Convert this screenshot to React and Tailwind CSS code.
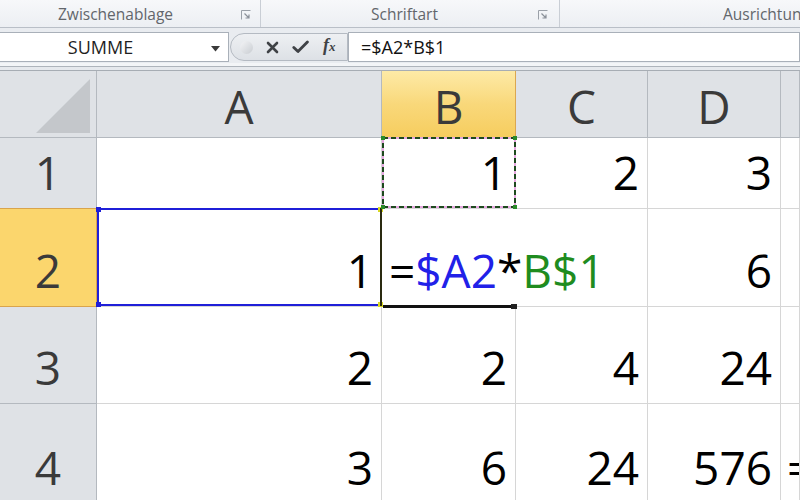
import React from "react";

const hdr = "bg-[#dfe2e6] border-r border-b border-[#b4b9bf] text-[#3a3a3a]";
const cellBase = "border-r border-b border-[#d6d6d6]";
const num = "flex items-end justify-end pr-[8px] pb-[13px] text-[46px] leading-none text-black";

function Launcher() {
  return (
    <svg width="10" height="10" viewBox="0 0 10 10" className="shrink-0">
      <path d="M0.5 9.5V0.5H9.5" fill="none" stroke="#9aa0a8" strokeWidth="1" />
      <path d="M3.5 3.5L8 8M8 4.5V8H4.5" fill="none" stroke="#8a9099" strokeWidth="1.2" />
    </svg>
  );
}

export default function App() {
  return (
    <div className="w-[800px] h-[500px] overflow-hidden bg-white relative font-['Open_Sans',sans-serif]">
      {/* Ribbon group labels */}
      <div className="h-[28px] flex bg-gradient-to-b from-[#f7f8fa] to-[#eceff3] border-b border-[#b9bfc7] text-[15.5px] text-[#62666b]">
        <div className="w-[261px] flex items-center border-r border-[#c9ced5] pl-[58px] pr-[9px] pt-[3px]">
          <span className="flex-1 leading-none">Zwischenablage</span>
          <Launcher />
        </div>
        <div className="w-[299px] flex items-center border-r border-[#c9ced5] pr-[11px] pt-[3px]">
          <span className="flex-1 text-center leading-none pl-[10px]">Schriftart</span>
          <Launcher />
        </div>
        <div className="flex-1 flex items-center pl-[163px] pt-[3px] overflow-hidden">
          <span className="leading-none whitespace-nowrap">Ausrichtung</span>
        </div>
      </div>

      {/* Formula bar */}
      <div className="h-[42px] bg-[#e9ecf0] flex flex-col">
        <div className="mt-[4px] h-[30px] flex items-stretch">
          <div className="w-[229px] bg-white border-y border-r border-[#a9b0b9] flex items-center relative">
            <span className="flex-1 text-center text-[18px] leading-none text-[#1f1f1f] pr-[27px]">SUMME</span>
            <svg width="9" height="6" viewBox="0 0 9 6" className="absolute left-[211px] top-[13px]">
              <path d="M0 0H9L4.5 5.5Z" fill="#3a3a3a" />
            </svg>
          </div>
          <div className="w-[118px] my-[1px] ml-[1px] rounded-l-full bg-gradient-to-b from-[#eef0f3] to-[#dde1e6] border border-[#b4bac2] flex items-center relative">
            <div className="absolute left-[9px] top-[7px] w-[13px] h-[13px] rounded-full bg-gradient-to-br from-[#f4f5f7] to-[#c9cdd2]" />
            <svg width="13" height="13" viewBox="0 0 13 13" className="absolute left-[35px] top-[7px]">
              <path d="M2 2L11 11M11 2L2 11" stroke="#3f4246" strokeWidth="2.6" strokeLinecap="round" />
            </svg>
            <svg width="17" height="14" viewBox="0 0 17 14" className="absolute left-[61px] top-[6px]">
              <path d="M1.8 7.5L6 11.6L15.4 2" fill="none" stroke="#3f4246" strokeWidth="2.8" strokeLinecap="round" strokeLinejoin="round" />
            </svg>
            <span className="absolute left-[92px] top-[2px] font-['Liberation_Serif',serif] italic font-bold text-[18px] leading-none text-[#3f4246]">
              f<span className="text-[13px]">x</span>
            </span>
          </div>
          <div className="flex-1 bg-white border border-[#a9b0b9] flex items-center pl-[12px] text-[18px] leading-none text-[#111]">
            =$A2*B$1
          </div>
        </div>
        <div className="h-[3px] bg-[#f3f5f7] mt-[1px]" />
        <div className="h-[1px] bg-[#aeb4bb]" />
        <div className="flex-1 bg-[#e6e9ed]" />
      </div>

      {/* Sheet */}
      <div className="relative">
        <div className="grid grid-cols-[97px_285px_134px_132px_133px_1fr] grid-rows-[67px_71px_98px_97px_100px] border-t border-[#a7adb4]">
          {/* header row */}
          <div className={`${hdr} relative`}>
            <svg width="97" height="67" viewBox="0 0 97 67" className="absolute inset-0">
              <path d="M36 62H90V8Z" fill="#c4c7cb" />
            </svg>
          </div>
          <div className={`${hdr} flex items-center justify-center pt-[4px] text-[46px] leading-none`}>A</div>
          <div className="bg-gradient-to-b from-[#fdeaa6] via-[#f9d87a] to-[#f6cd5e] border-r border-b border-[#dba750] text-[#3a3a3a] flex items-center justify-center pt-[4px] text-[46px] leading-none">B</div>
          <div className={`${hdr} flex items-center justify-center pt-[4px] text-[46px] leading-none`}>C</div>
          <div className={`${hdr} flex items-center justify-center pt-[4px] text-[46px] leading-none`}>D</div>
          <div className={`${hdr}`} />

          {/* row 1 */}
          <div className={`${hdr} flex items-end justify-center pb-[13px] text-[46px] leading-none`}>1</div>
          <div className={cellBase} />
          <div className={`${cellBase} ${num}`}>1</div>
          <div className={`${cellBase} ${num}`}>2</div>
          <div className={`${cellBase} ${num}`}>3</div>
          <div className={cellBase} />

          {/* row 2 */}
          <div className="bg-[#fbd66d] border-r border-b border-t border-[#d9a44c] -mt-px text-[#3a3a3a] flex items-end justify-center pb-[13px] text-[46px] leading-none">2</div>
          <div className={`${cellBase} ${num}`}>1</div>
          <div className="border-b border-[#d6d6d6] relative z-10 flex items-end pl-[7px] pb-[13px] text-[46px] leading-none whitespace-nowrap text-black">
            <span>=</span>
            <span className="text-[#2121e8]">$A2</span>
            <span>*</span>
            <span className="text-[#1f8c1f]">B$1</span>
          </div>
          <div className={`${cellBase} ${num}`}></div>
          <div className={`${cellBase} ${num}`}>6</div>
          <div className={cellBase} />

          {/* row 3 */}
          <div className={`${hdr} flex items-end justify-center pb-[13px] text-[46px] leading-none`}>3</div>
          <div className={`${cellBase} ${num}`}>2</div>
          <div className={`${cellBase} ${num}`}>2</div>
          <div className={`${cellBase} ${num}`}>4</div>
          <div className={`${cellBase} ${num}`}>24</div>
          <div className={cellBase} />

          {/* row 4 */}
          <div className={`${hdr} flex items-end justify-center pb-[13px] text-[46px] leading-none`}>4</div>
          <div className={`${cellBase} ${num}`}>3</div>
          <div className={`${cellBase} ${num}`}>6</div>
          <div className={`${cellBase} ${num}`}>24</div>
          <div className={`${cellBase} ${num}`}>576</div>
          <div className={`${cellBase} flex items-end pl-[6px] pb-[13px] text-[46px] leading-none text-black whitespace-nowrap overflow-hidden`}>=</div>
        </div>

        {/* A2 range highlight */}
        <div className="absolute z-20 left-[97px] top-[138px] w-[285px] h-[98px] border-2 border-[#1f1fd8] pointer-events-none">
          <div className="absolute -left-[3px] -top-[3px] w-[5px] h-[5px] bg-[#1f1fd8]" />
          <div className="absolute -right-[3px] -top-[3px] w-[5px] h-[5px] bg-[#d8d820]" />
          <div className="absolute -left-[3px] -bottom-[3px] w-[5px] h-[5px] bg-[#1f1fd8]" />
          <div className="absolute -right-[3px] -bottom-[3px] w-[5px] h-[5px] bg-[#d8d820]" />
        </div>

        {/* B2 active cell edges */}
        <div className="absolute z-20 left-[380px] top-[138px] w-[2px] h-[98px] bg-[#2a2a10]" />
        <div className="absolute z-20 left-[383px] top-[235px] w-[128px] h-[3px] bg-[#111]" />
        <div className="absolute z-20 left-[511px] top-[234px] w-[6px] h-[5px] bg-[#222]" />

        {/* B1 copy marquee */}
        <svg width="138" height="75" viewBox="0 0 138 75" className="absolute z-20 left-[380px] top-[65px] pointer-events-none">
          <rect x="3" y="3" width="132" height="69" fill="none" stroke="#e6a6e0" strokeWidth="2" />
          <rect x="3" y="3" width="132" height="69" fill="none" stroke="#1e4a1e" strokeWidth="2" strokeDasharray="5 3" />
          <rect x="1" y="1" width="4" height="4" fill="#2a8a2a" />
          <rect x="133" y="1" width="4" height="4" fill="#2a8a2a" />
          <rect x="1" y="70" width="4" height="4" fill="#2a8a2a" />
          <rect x="133" y="70" width="4" height="4" fill="#2a8a2a" />
        </svg>
      </div>
    </div>
  );
}
